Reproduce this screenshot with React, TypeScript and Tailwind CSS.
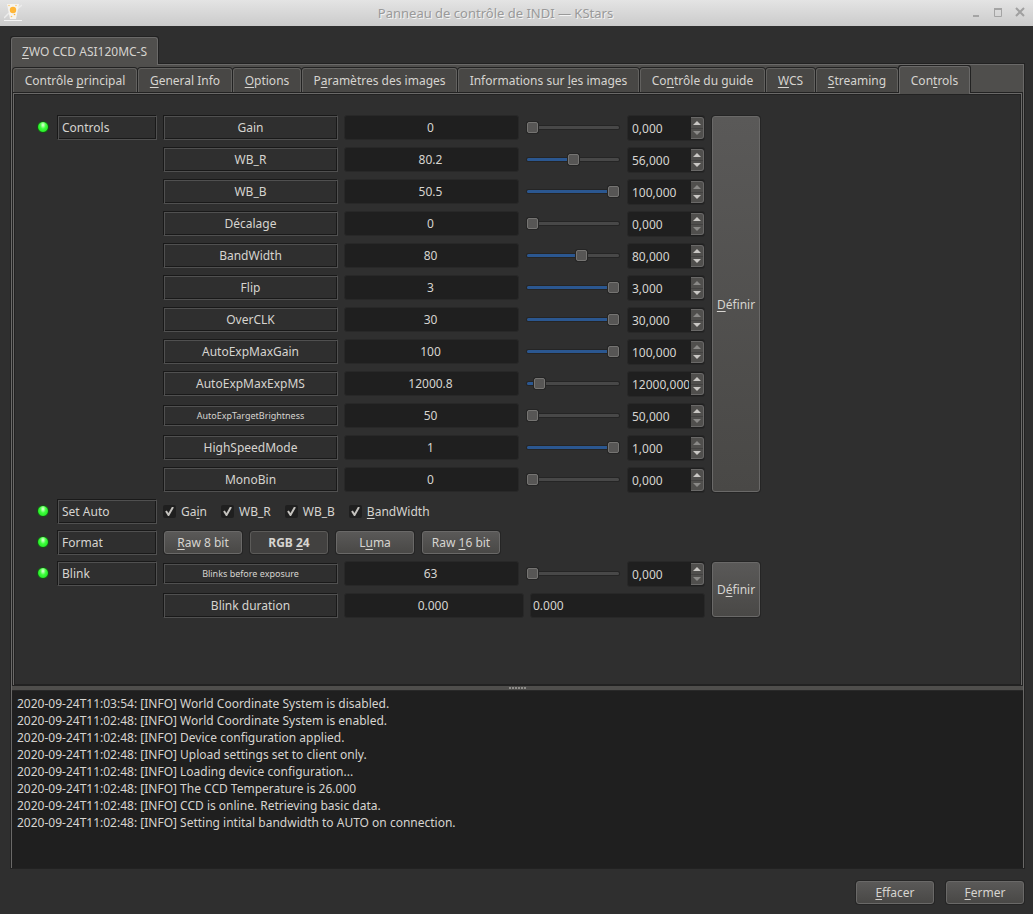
import { useState } from 'react';

interface NumberElement {
  name: string;
  value: string;
  target: string;
  position: number;
  small?: boolean;
}

const controls: NumberElement[] = [
  { name: 'Gain', value: '0', target: '0,000', position: 0 },
  { name: 'WB_R', value: '80.2', target: '56,000', position: 50 },
  { name: 'WB_B', value: '50.5', target: '100,000', position: 100 },
  { name: 'Décalage', value: '0', target: '0,000', position: 0 },
  { name: 'BandWidth', value: '80', target: '80,000', position: 60 },
  { name: 'Flip', value: '3', target: '3,000', position: 100 },
  { name: 'OverCLK', value: '30', target: '30,000', position: 100 },
  { name: 'AutoExpMaxGain', value: '100', target: '100,000', position: 100 },
  { name: 'AutoExpMaxExpMS', value: '12000.8', target: '12000,000', position: 9 },
  { name: 'AutoExpTargetBrightness', value: '50', target: '50,000', position: 0, small: true },
  { name: 'HighSpeedMode', value: '1', target: '1,000', position: 100 },
  { name: 'MonoBin', value: '0', target: '0,000', position: 0 },
];

const blink: NumberElement = {
  name: 'Blinks before exposure',
  value: '63',
  target: '0,000',
  position: 0,
  small: true,
};

// "&" marks the keyboard accelerator
const tabs = [
  { text: 'Contrôle &principal', width: 'w-[124px]' },
  { text: '&General Info', width: 'w-[94px]' },
  { text: '&Options', width: 'w-[68px]' },
  { text: 'P&aramètres des images', width: 'w-[155px]' },
  { text: 'Informations sur &les images', width: 'w-[181px]' },
  { text: 'Co&ntrôle du guide', width: 'w-[125px]' },
  { text: '&WCS', width: 'w-[49px]' },
  { text: '&Streaming', width: 'w-[82px]' },
  { text: 'Con&trols', width: 'w-[71px]' },
];

const autoSwitches = ['Ga&in', 'WB_R', 'WB_B', '&BandWidth'];

const formats = ['&Raw 8 bit', 'RGB &24', 'L&uma', 'Raw &16 bit'];

const log = [
  '2020-09-24T11:03:54: [INFO] World Coordinate System is disabled.',
  '2020-09-24T11:02:48: [INFO] World Coordinate System is enabled.',
  '2020-09-24T11:02:48: [INFO] Device configuration applied.',
  '2020-09-24T11:02:48: [INFO] Upload settings set to client only.',
  '2020-09-24T11:02:48: [INFO] Loading device configuration...',
  '2020-09-24T11:02:48: [INFO] The CCD Temperature is 26.000',
  '2020-09-24T11:02:48: [INFO] CCD is online. Retrieving basic data.',
  '2020-09-24T11:02:48: [INFO] Setting intital bandwidth to AUTO on connection.',
];

const buttonLook =
  'rounded-[3px] border border-[#6a6968] bg-linear-to-b from-[#5a5958] to-[#494846] shadow-[0_0_0_1px_#252525]';
const fieldLook = 'rounded-[3px] border border-[#282828] bg-[#1f1f1f] outline-none';
const activeTabLook =
  'z-10 -mb-px h-7 rounded-t-[3px] border border-b-0 border-[#6a6968] bg-[#504f4d] pb-px shadow-[0_-1px_0_#222222,1px_-1px_0_#222222,-1px_-1px_0_#222222]';

function Mnemonic({ text }: { text: string }) {
  const at = text.indexOf('&');
  if (at < 0) return <span>{text}</span>;
  return (
    <span className="whitespace-pre">
      {text.slice(0, at)}
      <span className="underline decoration-1 underline-offset-2 [text-decoration-skip-ink:none]">
        {text[at + 1]}
      </span>
      {text.slice(at + 2)}
    </span>
  );
}

function Led() {
  return (
    <div className="flex h-6 w-[15px] shrink-0 items-center pl-px">
      <span className="h-3 w-3 rounded-full border border-[#145214] bg-radial-[at_50%_30%] from-[#d2ffc8] from-5% via-[#3dff3d] via-40% to-[#14d814]" />
    </div>
  );
}

const frame =
  'flex items-center border border-t-[#191919] border-r-[#505050] border-b-[#505050] border-l-[#191919] shadow-[inset_1px_1px_0_#505050,inset_-1px_-1px_0_#191919]';

function GroupHead({ name }: { name: string }) {
  return (
    <>
      <Led />
      <div className={`${frame} h-[25px] w-[100px] shrink-0 px-1`}>{name}</div>
    </>
  );
}

function ElementLabel({ name, htmlFor, small }: { name: string; htmlFor: string; small?: boolean }) {
  return (
    <div className="flex h-[25px] w-[175px] shrink-0 items-center">
      <label
        htmlFor={htmlFor}
        className={`${frame} w-full justify-center ${small ? 'h-[21px] text-[9px]' : 'h-[25px]'}`}
      >
        {name}
      </label>
    </div>
  );
}

function Slider({ name, initial }: { name: string; initial: number }) {
  const [position, setPosition] = useState(initial);
  return (
    <div className="flex h-[25px] w-24 shrink-0 items-center px-0.5">
      <input
        type="range"
        min={0}
        max={100}
        value={position}
        aria-label={name}
        onChange={(e) => setPosition(Number(e.target.value))}
        style={{
          backgroundImage: `linear-gradient(to right, #2b5790 ${position}%, #484848 ${position}%)`,
        }}
        className="h-[3px] w-full appearance-none rounded-[2px] shadow-[0_0_0_1px_#252525] outline-none [&::-webkit-slider-thumb]:h-[11px] [&::-webkit-slider-thumb]:w-[11px] [&::-webkit-slider-thumb]:appearance-none [&::-webkit-slider-thumb]:rounded-[2px] [&::-webkit-slider-thumb]:border [&::-webkit-slider-thumb]:border-[#757472] [&::-webkit-slider-thumb]:bg-[#575655] [&::-webkit-slider-thumb]:shadow-[0_0_0_1px_#252525]"
      />
    </div>
  );
}

function SpinBox({ id, value, position }: { id: string; value: string; position: number }) {
  return (
    <div className={`${fieldLook} flex h-[26px] w-[78px] shrink-0 py-px`}>
      <input id={id} type="text" defaultValue={value} className="w-[63px] pt-px pr-0.5 pl-1 outline-none" />
      <div className="flex w-[13px] flex-col rounded-r-[3px] border border-l-0 border-[#6a6968] bg-[#504f4d]">
        <button aria-label="Augmenter" className="flex flex-1 items-center justify-center border-b border-[#434241]">
          <svg width="8" height="4" viewBox="0 0 8 4" fill={position === 100 ? '#8a8987' : '#c9c7c4'}>
            <path d="M4 0L8 4H0z" />
          </svg>
        </button>
        <button aria-label="Diminuer" className="flex flex-1 items-center justify-center">
          <svg width="8" height="4" viewBox="0 0 8 4" fill={position === 0 ? '#8a8987' : '#c9c7c4'}>
            <path d="M0 0H8L4 4z" />
          </svg>
        </button>
      </div>
    </div>
  );
}

function NumberRow({ item }: { item: NumberElement }) {
  const id = item.name.replace(/\s/g, '-');
  return (
    <div className="flex gap-1.5">
      <ElementLabel name={item.name} htmlFor={id} small={item.small} />
      <input
        readOnly
        aria-label={`${item.name} actuel`}
        value={item.value}
        className={`${fieldLook} h-[25px] w-[175px] shrink-0 pr-0.5 text-center`}
      />
      <Slider name={item.name} initial={item.position} />
      <SpinBox id={id} value={item.target} position={item.position} />
    </div>
  );
}

function SetButton({ text }: { text: string }) {
  return (
    <div className="flex w-[50px] shrink-0 p-px">
      <button className={`${buttonLook} w-full`}>
        <Mnemonic text={text} />
      </button>
    </div>
  );
}

function TitleBar() {
  return (
    <header className="flex h-[26px] items-center bg-linear-to-b from-[#e4e4e4] to-[#cbcbcb]">
      <div className="w-6 shrink-0 pl-1">
        <svg width="18" height="18" viewBox="0 0 18 18">
          <path d="M0 14L5 9M13 5L18 1" stroke="#ececec" strokeWidth="1.500" />
          <path d="M3 0H15L12 15H6z" fill="#f6f4ef" />
          <path d="M0 16.500H18" stroke="#f4f4f4" />
          <circle cx="9" cy="6" r="3.200" fill="#ffb637" />
          <circle cx="5" cy="1.500" r="0.700" fill="#ffc35c" />
          <circle cx="12" cy="1.500" r="0.700" fill="#ffc35c" />
          <circle cx="10.500" cy="10.500" r="0.800" fill="#ffb637" />
          <circle cx="7.500" cy="12.500" r="0.800" fill="#ffc35c" />
        </svg>
      </div>
      <h1 className="flex-1 text-center text-[13px] text-[#999999] [text-shadow:1px_1px_0_#f4f4f4]">
        Panneau de contrôle de INDI — KStars
      </h1>
      <div className="flex w-[66px] shrink-0 justify-end gap-3 pr-2 pb-0.5">
        <button aria-label="Réduire">
          <svg width="10" height="10" viewBox="0 0 10 10">
            <path d="M2 8H8V10H2z" fill="#a4a4a4" />
          </svg>
        </button>
        <button aria-label="Agrandir">
          <svg width="10" height="10" viewBox="0 0 10 10">
            <path d="M1.500 1.500H8.500V9.500H1.500z" fill="none" stroke="#a4a4a4" />
            <path d="M1 1H9V3H1z" fill="#a4a4a4" />
          </svg>
        </button>
        <button aria-label="Fermer la fenêtre">
          <svg width="10" height="10" viewBox="0 0 10 10">
            <path d="M1 1L9 9M9 1L1 9" stroke="#a0a0a0" strokeWidth="2" />
          </svg>
        </button>
      </div>
    </header>
  );
}

export default function App() {
  const [format, setFormat] = useState('RGB &24');

  return (
    <div className="flex min-h-screen flex-col bg-[#2f2f2f] font-['Noto_Sans',sans-serif] text-[12px] leading-[17px] text-[#d6d4d0]">
      <TitleBar />

      <main className="flex flex-1 flex-col pt-[11px] pr-[9px] pb-[10px] pl-[11px]">
        <div className="flex" role="tablist">
          <button role="tab" aria-selected="true" className={`${activeTabLook} px-2.5`}>
            <Mnemonic text="&ZWO CCD ASI120MC-S" />
          </button>
        </div>

        <div className="flex flex-1 flex-col border border-b-0 border-[#6a6968] bg-[#4f4e4c] shadow-[0_0_0_1px_#222222]">
          <div className="flex h-7 items-end pl-px" role="tablist">
            {tabs.map((tab) =>
              tab.text === 'Con&trols' ? (
                <button key={tab.text} role="tab" aria-selected="true" className={`${activeTabLook} ${tab.width}`}>
                  <Mnemonic text={tab.text} />
                </button>
              ) : (
                <button
                  key={tab.text}
                  role="tab"
                  aria-selected="false"
                  className={`${tab.width} mr-px mb-px h-6 rounded-t-[3px] border border-b-0 border-[#62615f] bg-[#484745] shadow-[0_0_0_1px_#222222]`}
                >
                  <Mnemonic text={tab.text} />
                </button>
              )
            )}
          </div>

          <section className="mx-px flex flex-1 flex-col gap-1.5 border border-b-0 border-[#6a6968] bg-[#2f2f2f] pt-[21px] pl-[22px] shadow-[0_0_0_1px_#222222,inset_0_0_0_1px_#222222]">
            <div className="flex gap-1.5">
              <GroupHead name="Controls" />
              <div className="flex flex-col gap-1.5">
                {controls.map((item) => (
                  <NumberRow key={item.name} item={item} />
                ))}
              </div>
              <SetButton text="&Définir" />
            </div>

            <div className="flex gap-1.5">
              <GroupHead name="Set Auto" />
              <div className="flex gap-3.5">
                {autoSwitches.map((name) => (
                  <label key={name} className="flex items-center gap-[5px]">
                    <input type="checkbox" defaultChecked className="peer sr-only" />
                    <span className="flex h-[13px] w-[13px] items-center justify-center rounded-[2px] bg-[#1f1f1f] peer-checked:[&>svg]:visible">
                      <svg className="invisible" width="9" height="9" viewBox="0 0 9 9" fill="none" stroke="#c4c2be" strokeWidth="2">
                        <path d="M1 4L3.500 8L8 0" />
                      </svg>
                    </span>
                    <Mnemonic text={name} />
                  </label>
                ))}
              </div>
            </div>

            <div className="flex gap-1.5">
              <GroupHead name="Format" />
              {formats.map((name) => (
                <div key={name} className="flex h-[25px] w-20 p-px">
                  <button
                    onClick={() => setFormat(name)}
                    className={
                      name === format
                        ? 'w-full rounded-[3px] border border-[#5c5b59] bg-[#424140] font-bold shadow-[0_0_0_1px_#252525]'
                        : `${buttonLook} w-full`
                    }
                  >
                    <Mnemonic text={name} />
                  </button>
                </div>
              ))}
            </div>

            <div className="flex gap-1.5">
              <GroupHead name="Blink" />
              <div className="flex flex-col gap-1.5">
                <NumberRow item={blink} />
                <div className="flex gap-1.5">
                  <ElementLabel name="Blink duration" htmlFor="blink-duration" />
                  <input
                    readOnly
                    aria-label="Blink duration actuel"
                    value="0.000"
                    className={`${fieldLook} h-[25px] w-[180px] pr-0.5 text-center`}
                  />
                  <input
                    id="blink-duration"
                    type="text"
                    defaultValue="0.000"
                    className={`${fieldLook} h-[25px] w-[175px] px-0.5`}
                  />
                </div>
              </div>
              <SetButton text="D&éfinir" />
            </div>
          </section>

          {/* Splitter handle */}
          <div className="z-10 flex h-[5px] items-center justify-center gap-px">
            {[0, 1, 2, 3, 4, 5].map((dot) => (
              <span key={dot} className="h-0.5 w-0.5 bg-[#8e8d8a]" />
            ))}
          </div>

          <div className="h-[178px] overflow-auto border-t border-[#292929] bg-[#1f1f1f] px-[5px] pt-1">
            {log.map((line) => (
              <p key={line}>{line}</p>
            ))}
          </div>
        </div>

        <footer className="flex justify-end gap-3 pt-[13px]">
          <button className={`${buttonLook} h-[23px] w-[78px]`}>
            <Mnemonic text="&Effacer" />
          </button>
          <button className={`${buttonLook} h-[23px] w-[78px]`}>
            <Mnemonic text="&Fermer" />
          </button>
        </footer>
      </main>
    </div>
  );
}
